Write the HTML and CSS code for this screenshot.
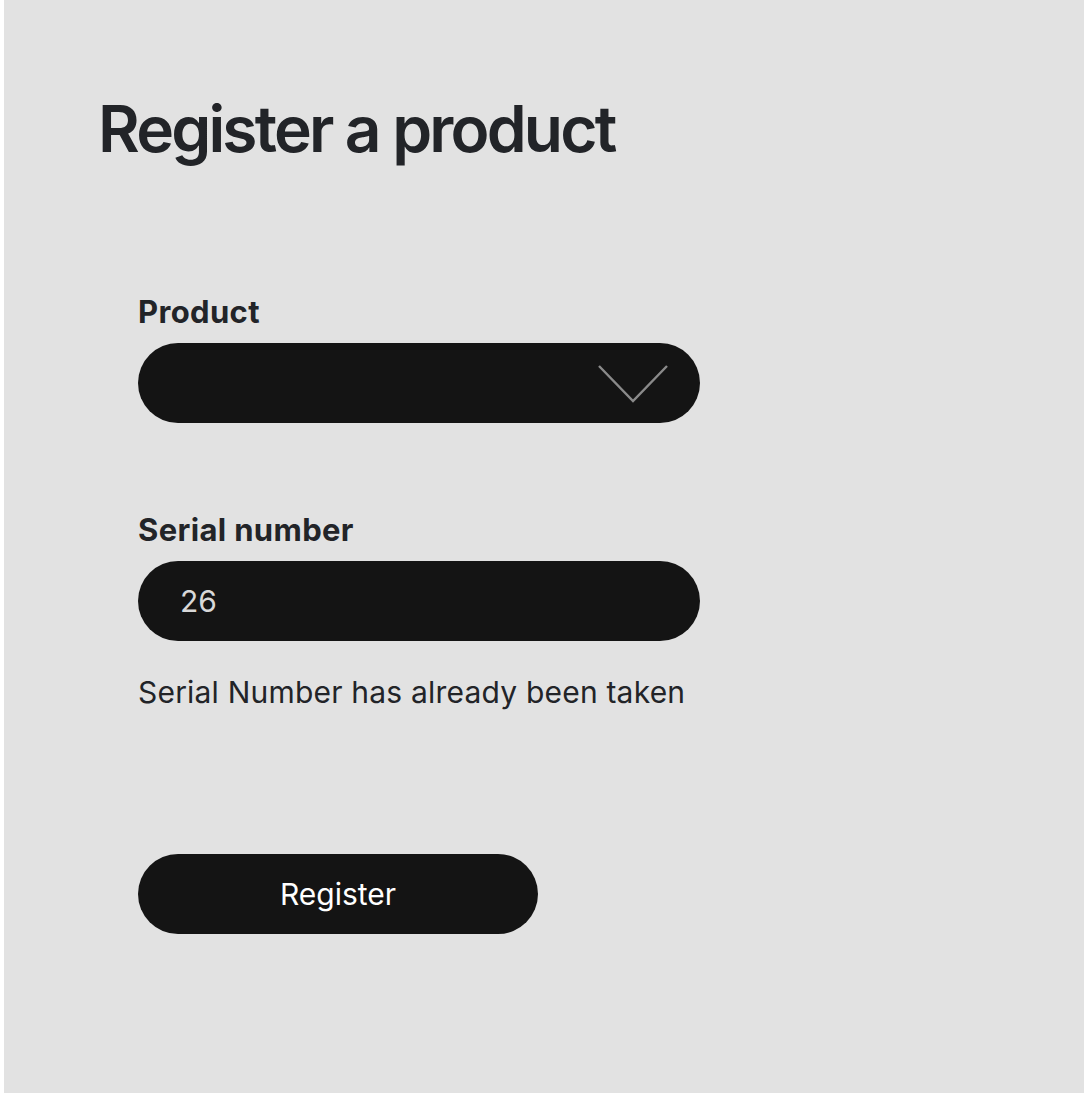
FILE: index.html
```html
<!DOCTYPE html>
<html lang="en">
<head>
    <meta charset="UTF-8">
    <meta name="viewport" content="width=device-width, initial-scale=1.0">
    <title>Register a product</title>
    <link rel="stylesheet" href="styles.css">
</head>
<body>
    <main class="page">
        <h1>Register a product</h1>

        <form class="register-form">
            <div class="field">
                <label for="product">Product</label>
                <div class="select-wrap">
                    <select id="product" name="product">
                        <option value=""></option>
                    </select>
                    <svg class="chevron" width="70" height="38" viewBox="0 0 70 38" aria-hidden="true">
                        <polyline points="1,1 35,36 69,1" fill="none" stroke="#8a8a8a" stroke-width="2.4"/>
                    </svg>
                </div>
            </div>

            <div class="field">
                <label for="serial">Serial number</label>
                <input type="text" id="serial" name="serial" value="26">
                <p class="field-error">Serial Number has already been taken</p>
            </div>

            <button type="submit" class="submit-button">Register</button>
        </form>
    </main>
</body>
</html>
```

FILE: styles.css
```css
/* General body styling */
html, body {
    margin: 0;
    padding: 0;
    background-color: #fff;
}

body {
    font-family: Inter, "Noto Sans", Arial, sans-serif;
    padding-left: 4px;
}

/* Grey panel holding the form */
.page {
    background-color: #e2e2e2;
    height: 1093px;
    padding: 90px 0 0 94px;
    box-sizing: border-box;
}

h1 {
    margin: 0;
    font-size: 64px;
    font-weight: 600;
    color: #222428;
    letter-spacing: -2.8px;
}

.register-form {
    margin-top: 126px;
    padding-left: 40px;
    width: 562px;
}

.field {
    display: flex;
    flex-direction: column;
    margin-bottom: 88px;
}

label {
    font-size: 31px;
    font-weight: 700;
    color: #222428;
    margin-bottom: 13px;
    letter-spacing: 0.35px;
}

/* Pill shaped inputs */
select,
input,
.submit-button {
    height: 80px;
    border: none;
    border-radius: 40px;
    background-color: #141414;
    font-family: inherit;
    font-size: 30px;
    box-sizing: border-box;
    outline: none;
}

.select-wrap {
    position: relative;
}

select {
    width: 100%;
    appearance: none;
    -webkit-appearance: none;
    color: #ddd;
    padding: 0 44px;
}

.chevron {
    position: absolute;
    right: 32px;
    top: 22px;
    pointer-events: none;
}

input {
    width: 100%;
    color: #d8d8d8;
    padding: 0 42px;
}

.field-error {
    margin: 33px 0 0;
    font-size: 30px;
    color: #222428;
    letter-spacing: 0.2px;
}

.submit-button {
    display: block;
    width: 400px;
    margin-top: 144px;
    color: #fff;
    cursor: pointer;
}
```
